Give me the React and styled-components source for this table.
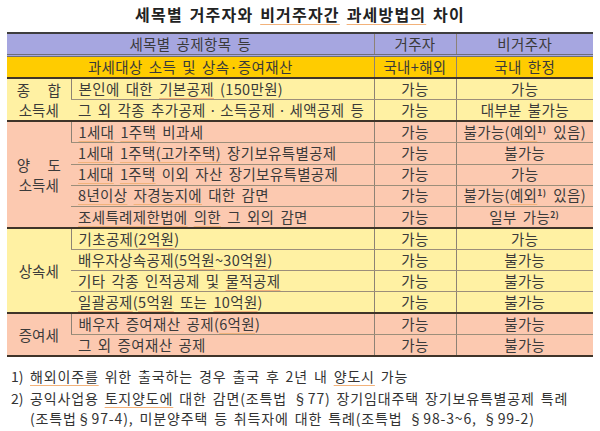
import styled, { createGlobalStyle } from "styled-components";

const GlobalStyle = createGlobalStyle`
  body {
    margin: 0;
    background: #ffffff;
    font-family: "Noto Sans CJK KR", "Noto Sans", sans-serif;
    color: #3a3a3a;
  }
`;

const palette = {
  head: "#a6a6e0",
  gold: "#ffcc00",
  yellow: "#fff1a3",
  salmon: "#fcc9b0",
};

const Page = styled.div`
  width: 600px;
  padding: 0 7px;
  box-sizing: border-box;
`;

const Title = styled.h1`
  margin: 0;
  height: 32px;
  line-height: 29px;
  text-align: center;
  font-size: 16px;
  font-weight: 700;
  letter-spacing: 1.2px;
  word-spacing: 2px;
  color: #222;
`;

const Table = styled.table`
  width: 586px;
  border-collapse: collapse;
  table-layout: fixed;
  border-top: 2px solid #3e3e3e;
`;

const Cell = styled.td`
  height: 20.1px;
  padding: 0;
  font-size: 14.5px;
  line-height: 1;
  letter-spacing: 0.35px;
  word-spacing: 2.5px;
  white-space: nowrap;
  background: ${({ $bg }) => palette[$bg]};
  text-align: ${({ $left }) => ($left ? "left" : "center")};
  padding-left: ${({ $left }) => ($left ? "7px" : "0")};
  border-left: 1px solid #8d8275;
  border-bottom: ${({ $end }) =>
    $end === "double"
      ? "3px double #6e6e78"
      : $end
      ? "2px solid #3f3429"
      : "1px solid #9c8e7a"};
  &:first-child {
    border-left: none;
  }
`;

const CatCell = styled(Cell)`
  line-height: 20px;
  letter-spacing: 0;
  vertical-align: middle;
`;

const Spread = styled.span`
  display: flex;
  justify-content: space-between;
  width: 44px;
  margin: 0 auto;
`;

const Dot = styled.span`
  margin: 0 3px;
`;

const Sup = styled.sup`
  font-size: 8.5px;
  font-weight: 700;
  vertical-align: 5px;
  line-height: 0;
  margin-right: 1px;
`;

const U = styled.span`
  text-decoration: underline;
  text-decoration-color: #f2b27a;
  text-decoration-thickness: 1px;
  text-underline-offset: 3px;
`;

const Notes = styled.div`
  margin-top: 10px;
  padding-left: 4px;
  font-size: 14px;
  line-height: 19.5px;
  color: #333;
  letter-spacing: 0.85px;
  word-spacing: 2px;
`;

const Note = styled.div`
  display: flex;
  white-space: nowrap;
  & + & {
    margin-top: 2.5px;
  }
`;

const Num = styled.span`
  flex: none;
  width: 19px;
  letter-spacing: 0;
`;

const rows = [
  {
    cat: "종합",
    bg: "yellow",
    items: [
      [<>본인에 대한 <U>기본공제</U> (150만원)</>, "가능", "가능"],
      [
        <>
          그 외 각종 추가공제<Dot>·</Dot>소득공제<Dot>·</Dot>세액공제 등
        </>,
        "가능",
        "대부분 불가능",
      ],
    ],
  },
  {
    cat: "양도",
    bg: "salmon",
    items: [
      [<><U>1세대</U> <U>1주택</U> 비과세</>, "가능", <>불가능(<U>예외</U><Sup>1)</Sup> 있음)</>],
      [<><U>1세대</U> <U>1주택(고가주택)</U> 장기보유특별공제</>, "가능", "불가능"],
      [<><U>1세대</U> <U>1주택</U> 이외 자산 장기보유특별공제</>, "가능", "가능"],
      [<><U>8년이상</U> <U>자경농지에</U> 대한 감면</>, "가능", <>불가능(<U>예외</U><Sup>1)</Sup> 있음)</>],
      [<><U>조세특례제한법에</U> <U>의한</U> 그 외의 감면</>, "가능", <>일부 가능<Sup>2)</Sup></>],
    ],
  },
  {
    cat: "상속세",
    bg: "yellow",
    items: [
      [<>기초공제(<U>2억원</U>)</>, "가능", "가능"],
      [<>배우자상속공제(<U>5억원</U>~<U>30억원</U>)</>, "가능", "불가능"],
      [<>기타 각종 인적공제 및 <U>물적공제</U></>, "가능", "불가능"],
      [<><U>일괄공제</U>(<U>5억원</U> 또는 <U>10억원</U>)</>, "가능", "불가능"],
    ],
  },
  {
    cat: "증여세",
    bg: "salmon",
    items: [
      [<>배우자 증여재산 공제(<U>6억원</U>)</>, "가능", "불가능"],
      ["그 외 증여재산 공제", "가능", "불가능"],
    ],
  },
];

const CategoryLabel = ({ name }) => {
  if (name === "종합" || name === "양도") {
    return (
      <>
        <Spread>
          <span>{name[0]}</span>
          <span>{name[1]}</span>
        </Spread>
        소득세
      </>
    );
  }
  return name;
};

export default function App() {
  return (
    <Page>
      <GlobalStyle />
      <Title>
        세목별 거주자와 <U>비거주자간</U> <U>과세방법의</U> 차이
      </Title>
      <Table>
        <colgroup>
          <col style={{ width: 64 }} />
          <col style={{ width: 303 }} />
          <col style={{ width: 82 }} />
          <col style={{ width: 137 }} />
        </colgroup>
        <tbody>
          <tr>
            <Cell $bg="head" $end="double" colSpan={2}>
              세목별 공제항목 등
            </Cell>
            <Cell $bg="head" $end="double">거주자</Cell>
            <Cell $bg="head" $end="double">비거주자</Cell>
          </tr>
          <tr>
            <Cell $bg="gold" $end colSpan={2}>
              과세대상 소득 및 상속·증여재산
            </Cell>
            <Cell $bg="gold" $end>국내+해외</Cell>
            <Cell $bg="gold" $end>국내 한정</Cell>
          </tr>
          {rows.map((section) =>
            section.items.map((item, i) => {
              const last = i === section.items.length - 1;
              return (
                <tr key={section.cat + i}>
                  {i === 0 && (
                    <CatCell
                      $bg={section.bg}
                      $end
                      rowSpan={section.items.length}
                    >
                      <CategoryLabel name={section.cat} />
                    </CatCell>
                  )}
                  <Cell $bg={section.bg} $end={last} $left>
                    {item[0]}
                  </Cell>
                  <Cell $bg={section.bg} $end={last}>{item[1]}</Cell>
                  <Cell $bg={section.bg} $end={last}>{item[2]}</Cell>
                </tr>
              );
            })
          )}
        </tbody>
      </Table>
      <Notes>
        <Note>
          <Num>1)</Num>
          <span>
            <U>해외이주를</U> 위한 출국하는 경우 출국 후 2년 내 <U>양도시</U> 가능
          </span>
        </Note>
        <Note>
          <Num>2)</Num>
          <span>
            공익사업용 <U>토지양도에</U> 대한 감면(조특법 §77) 장기임대주택
            장기보유특별공제 특례
            <br />
            (조특법§97-4), 미분양주택 등 취득자에 대한 특례(조특법 §98-3~6,
            §99-2)
          </span>
        </Note>
      </Notes>
    </Page>
  );
}
